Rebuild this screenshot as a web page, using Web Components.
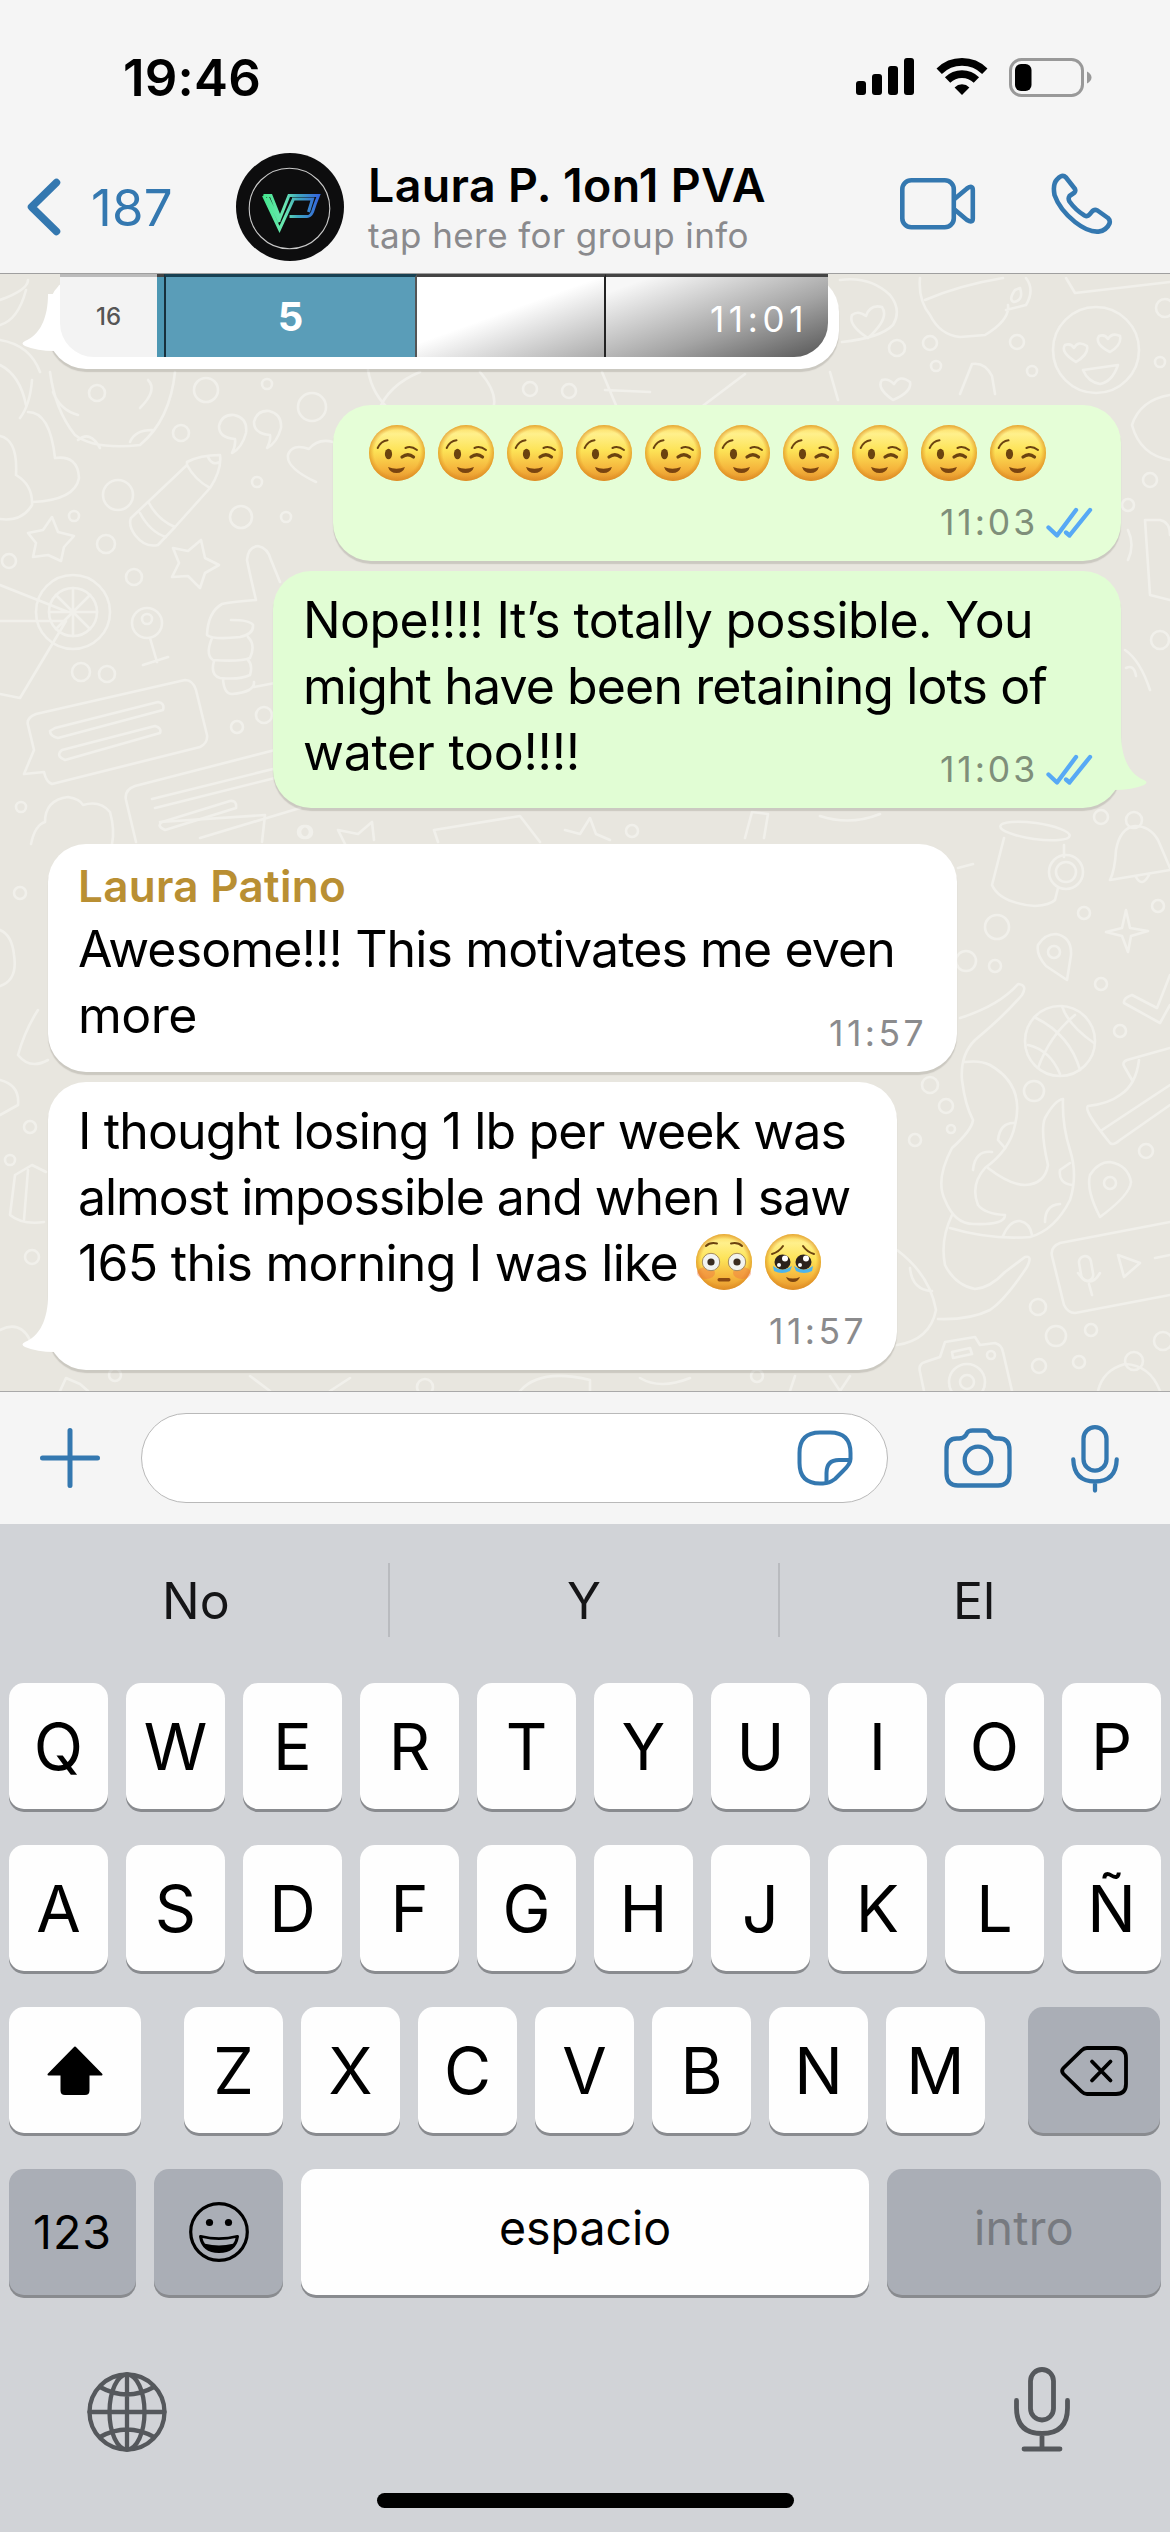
<!DOCTYPE html>
<html lang="es">
<head>
<meta charset="utf-8">
<title>Chat</title>
<style>
html,body{margin:0;padding:0}
body{width:1170px;height:2532px;overflow:hidden;font-family:Inter,"Liberation Sans",sans-serif;color:#000;background:#d1d3d7}
</style>
</head>
<body>
<chat-screen></chat-screen>
<script>
const define=(name,html,init)=>{
  const t=document.createElement('template');t.innerHTML=html;
  customElements.define(name,class extends HTMLElement{
    constructor(){super();this.attachShadow({mode:'open'}).append(t.content.cloneNode(true));}
    connectedCallback(){if(init)init.call(this,this.shadowRoot);}
  });
};

/* ---------- icons ---------- */
const B='fill="none" stroke="#3478b0" stroke-linecap="round" stroke-linejoin="round"';
const G='fill="none" stroke="#55585c" stroke-linecap="round" stroke-linejoin="round"';
const FACE='<defs><linearGradient id="f" x1="0" y1="0" x2="0" y2="1"><stop offset="0" stop-color="#fbd95c"/><stop offset=".16" stop-color="#fff08c"/><stop offset=".45" stop-color="#fde357"/><stop offset=".78" stop-color="#f5b53c"/><stop offset="1" stop-color="#e3922c"/></linearGradient><radialGradient id="e"><stop offset=".82" stop-color="#e08a1e" stop-opacity="0"/><stop offset="1" stop-color="#d98a20" stop-opacity=".65"/></radialGradient></defs><circle cx="28" cy="28" r="28" fill="url(#f)"/><circle cx="28" cy="28" r="28" fill="url(#e)"/>';
const ICONS={
signal:[58,38,'<g fill="#000"><rect x="0" y="23" width="10" height="14" rx="3"/><rect x="16" y="16" width="10" height="21" rx="3"/><rect x="32" y="8" width="10" height="29" rx="3"/><rect x="48" y="0" width="10" height="37" rx="3"/></g>'],
wifi:[52,38,'<g fill="none" stroke="#000" stroke-width="7.6"><path d="M3.2 13.2A32.5 32.5 0 0 1 48.8 13.2"/><path d="M11.6 22A20.5 20.5 0 0 1 40.4 22"/></g><path d="M26 37 18.6 29.4A10.5 10.5 0 0 1 33.4 29.4Z" fill="#000"/>'],
battery:[83,40,'<rect x="1.5" y="1.5" width="72" height="36" rx="11" fill="none" stroke="#999" stroke-width="3"/><rect x="6" y="6" width="16.500" height="27" rx="6" fill="#000"/><path d="M78 13.500Q82.500 16 82.500 19.500T78 25.500Z" fill="#999"/>'],
back:[34,58,`<path ${B} stroke-width="7.500" d="M29.500 4.500 4.500 29 29.500 53.500"/>`],
video:[76,52,`<g ${B} stroke-width="4.600"><rect x="2.300" y="2.300" width="51.500" height="47" rx="9"/><path d="M54.500 21 67 10.500Q72.800 6.500 72.800 12V40.500Q72.800 45.500 67 42L54.500 31.500"/></g>`],
phone:[62,62,`<path ${B} stroke-width="4.600" d="M9.500 3.500Q12.500 2 15 4.500L24 16Q24.800 18 23.500 19.500L18.500 23Q16.800 25.500 18.500 28.500Q24.500 37 33.500 42.500Q36.500 44 38.500 41.500L41.500 38Q43.500 36 46.500 37.500L57 45Q59.500 47.500 58.500 50.500Q55.500 57.500 47.500 58.600Q37.500 59.500 24 49Q8.500 36.500 3.500 22Q1.500 11 6 6.500Q8 4.300 9.500 3.500Z"/>`],
avatar:[108,108,'<defs><linearGradient id="g" x1="0" x2="1"><stop offset="0" stop-color="#45e58d"/><stop offset=".38" stop-color="#6be8b2"/><stop offset=".62" stop-color="#3fa8bd"/><stop offset="1" stop-color="#3466dd"/></linearGradient></defs><circle cx="54" cy="54" r="54" fill="#0d0d0e"/><circle cx="53.500" cy="55.500" r="40.300" fill="none" stroke="#c9c9c9" stroke-width="1.100"/><path d="M27.500 42.500H35L44 65 53 42.500H82.500Q79 51 76.500 59Q74.500 63.500 71 63.500H53.500M56 46H76.500L72.500 59M27.500 42.500 43.500 76.500 57.500 46M31.500 44 43.500 69" fill="none" stroke="url(#g)" stroke-width="3"/>'],
ticks:[48,32,'<g fill="none" stroke="#57a9f5" stroke-width="4.300" stroke-linecap="round" stroke-linejoin="round"><path d="M2.500 20.500 11 28.500 30 3"/><path d="M20 25.500 23.500 28.500 44 3"/></g>'],
plus:[60,60,`<path ${B} stroke-width="5" d="M30 2.500V57.500M2.500 30H57.500"/>`],
sticker:[56,56,`<g ${B} stroke-width="4"><path d="M26 53.500H23Q2.500 53.500 2.500 33V23Q2.500 2.500 23 2.500H33Q53.500 2.500 53.500 23V29Q53.500 34 46 41L38 49Q32 53.500 26 53.500Z"/><path d="M29.500 52.500V43Q29.500 30 42 30H52.500"/></g>`],
camera:[68,60,`<g ${B} stroke-width="4.300"><path d="M13 10.500H15Q19.500 10.500 22 7L23 5Q24.500 2.500 28.500 2.500H39.500Q43.500 2.500 45 5L46 7Q48.500 10.500 53 10.500H55Q65.500 10.500 65.500 22V45Q65.500 57.500 54 57.500H14Q2.500 57.500 2.500 45V22Q2.500 10.500 13 10.500Z"/><circle cx="34" cy="32" r="13.300"/></g>`],
mic:[48,68,`<g ${B} stroke-width="4.300"><rect x="12.500" y="2.200" width="23" height="43.500" rx="11.500"/><path d="M2.300 34.500Q3 56.500 24 56.500T45.700 34.500M24 57V65.500"/></g>`],
shift:[58,50,'<path d="M29 1.500 55.500 28.500H42.500V44.500Q42.500 48 39 48H19Q15.500 48 15.500 44.500V28.500H2.500Z" fill="#000" stroke="#000" stroke-width="2" stroke-linejoin="round"/>'],
del:[68,50,'<g fill="none" stroke="#000" stroke-width="3.800" stroke-linecap="round" stroke-linejoin="round"><path d="M27 2H56Q66 2 66 12V38Q66 48 56 48H27Q24 48 21.500 45.500L3.500 28Q.800 25 3.500 22L21.500 4.500Q24 2 27 2Z"/><path d="M32 15.500 50.500 34.500M50.500 15.500 32 34.500"/></g>'],
smile:[60,60,'<circle cx="30" cy="30" r="28.300" fill="none" stroke="#000" stroke-width="3.200"/><circle cx="20.500" cy="20.500" r="3.600"/><circle cx="39.500" cy="20.500" r="3.600"/><path d="M11.500 34.500Q30 39 48.500 34.500Q46 49.500 30 49.500T11.500 34.500Z" fill="#000" stroke="#000" stroke-width="3" stroke-linejoin="round"/><path d="M13.500 36Q30 40 46.500 36Q46 39.500 44 41.800Q30 45 16 41.800Q14 39 13.500 36Z" fill="#aaaeb6"/>'],
globe:[80,80,`<g ${G} stroke-width="4.300"><circle cx="40" cy="40" r="37.500"/><ellipse cx="40" cy="40" rx="17.500" ry="37.500"/><path d="M40 2.500V77.500M2.500 40H77.500M13 15Q40 30 67 15M13 65Q40 50 67 65"/></g>`],
dictate:[56,85,`<g ${G} stroke-width="4.800"><rect x="16.500" y="2.500" width="23" height="50.500" rx="11.500"/><path d="M2.500 33.500V41Q2.500 66.500 28 66.500T53.500 41V33.500M28 67V81M10 82H46"/></g>`],
wink:[56,56,FACE+'<g fill="none" stroke="#6b4310" stroke-linecap="round"><path stroke-width="2" d="M8.700 23Q12 16 18.500 15.300M36.500 23Q42 20.500 48 25"/><path stroke-width="3.200" d="M33 32Q39 27.500 44.500 32"/></g><ellipse cx="19.500" cy="29" rx="3.600" ry="5.200" fill="#6b4310"/><path d="M19 42Q27.500 45.500 36 42Q34 48 27.500 48T19 42Z" fill="#7a4410"/>'],
flushed:[56,56,FACE+'<ellipse cx="10" cy="39" rx="9" ry="6" fill="#ee7440" opacity=".45"/><ellipse cx="46" cy="39" rx="9" ry="6" fill="#ee7440" opacity=".45"/><g fill="none" stroke="#6b4310" stroke-width="2" stroke-linecap="round"><path d="M10 12Q14 8 21 9.500M35 9.500Q42 8 46 12"/></g><g fill="#f2f3f0" stroke="#a48b5c" stroke-width="1"><circle cx="15" cy="28" r="8.700"/><circle cx="41" cy="28" r="8.700"/></g><circle cx="15" cy="28" r="3.600" fill="#3a2c20"/><circle cx="41" cy="28" r="3.600" fill="#3a2c20"/><rect x="21.500" y="44" width="13" height="3.500" rx="1.700" fill="#8b4a12"/>'],
tears:[56,56,FACE+'<g fill="none" stroke="#6b4310" stroke-width="2" stroke-linecap="round"><path d="M7 20Q14 18 18 12M38 12Q42 18 49 20"/></g><path d="M8 32Q17 39 27 32L25 37Q17 41 9 37ZM29 32Q39 39 48 32L47 37Q39 41 31 37Z" fill="#4db5ed"/><ellipse cx="17.500" cy="28" rx="8" ry="7.500" fill="#2c221c"/><ellipse cx="38.500" cy="28" rx="8" ry="7.500" fill="#2c221c"/><g fill="#fff"><circle cx="20" cy="24.500" r="3"/><circle cx="41" cy="24.500" r="3"/><circle cx="14" cy="31" r="2"/><circle cx="35" cy="31" r="2"/></g><path d="M21 43Q28 46 35 43Q33 48 28 48T21 43Z" fill="#7a4410"/>']
};
customElements.define('ui-icon',class extends HTMLElement{
  connectedCallback(){
    const [w,h,body]=ICONS[this.getAttribute('name')];
    const r=this.shadowRoot||this.attachShadow({mode:'open'});
    r.innerHTML=`<style>:host{display:block;flex:none;width:${w}px;height:${h}px}svg{display:block}</style><svg width="${w}" height="${h}" viewBox="0 0 ${w} ${h}">${body}</svg>`;
  }
});

/* A single line of text whose tracking is adjusted to a given width. */
define('fit-line','<style>:host{display:block;width:max-content;white-space:nowrap}span{display:inline-block;letter-spacing:0}</style><span><slot></slot></span>',function(r){
  const w=+this.getAttribute('w');if(!w)return;
  const s=r.querySelector('span'),n=this.textContent.trim().length;
  const d=(w-s.getBoundingClientRect().width)/n;
  s.style.letterSpacing=d+'px';
});

define('status-bar',`<style>
:host{display:flex;height:120px;align-items:flex-start;font-weight:600;font-size:51px}
fit-line{margin:47px 0 0 123px;line-height:62px}
.r{display:flex;margin:58px 78px 0 auto;gap:21.500px}
</style><fit-line w="138">19:46</fit-line><div class="r"><ui-icon name="signal"></ui-icon><ui-icon name="wifi"></ui-icon><ui-icon name="battery"></ui-icon></div>`);

define('chat-header',`<style>
:host{display:flex;border-bottom:1.500px solid #9f9f9f;box-sizing:border-box;height:154px}
.n{color:#3478b0;font-size:51px;line-height:62px;margin:57px 0 0 30px;width:82px}
.t{margin:35px 0 0 22px;width:530px}
.t1{font-weight:600;font-size:46.500px;line-height:60px;margin-left:2px}
.t2{color:#8a8a8d;font-size:35px;line-height:44px;margin-left:2px;margin-top:-2px}
.b{margin:58px 0 0 27px}.a{margin:33px 0 0 63px}.v{margin:58px 0 0 4px}.p{margin:53px 0 0 75px}
</style><ui-icon class="b" name="back"></ui-icon><fit-line class="n" w="82">187</fit-line><ui-icon class="a" name="avatar"></ui-icon>
<div class="t"><fit-line class="t1" w="398">Laura P. 1on1 PVA</fit-line><fit-line class="t2" w="381">tap here for group info</fit-line></div>
<ui-icon class="v" name="video"></ui-icon><ui-icon class="p" name="phone"></ui-icon>`);

define('wall-paper',`<style>:host{position:absolute;inset:0;z-index:0}svg{display:block}</style>
<svg width="1170" height="1117" viewBox="0 274 1170 1117"><rect y="274" width="1170" height="1117" fill="#e8e6df"/>
<g id="d" fill="none" stroke="#f1f0eb" stroke-width="2.600" stroke-linecap="round" stroke-linejoin="round">
<path d="M50 372Q55 410 75 435Q95 450 140 445Q170 420 175 372M53 392Q60 410 78 415M78 440Q90 430 100 448M130 442Q135 430 152 430M148 380Q158 390 140 408"/>
<path d="M20 418Q30 405 32 380M28 412Q50 412 55 458Q78 455 79 478Q75 500 33 502M0 436Q18 440 16 475Q33 485 32 505Q22 522 0 519"/>
<path d="M187 465 131 518Q128 525 135 535Q145 548 158 545L175 527 210 488Q222 470 220 455Q200 455 187 462ZM149 503Q158 520 175 527M140 513Q150 532 166 537M187 465Q195 480 210 488M208 457Q212 466 220 462"/>
<path d="M52 517 58 532 74 536 64 547 61 561 48 555 33 557 36 543 28 533 43 530ZM201 540 205 558 219 565 205 573 200 588 188 576 172 577 179 563 173 548 188 551Z"/>
<path d="M316 482Q286 468 288 455Q292 443 309 449Q318 438 333 442M235 439Q219 438 219 426Q222 414 234 415Q248 418 246 433Q242 448 232 453Q236 445 235 439M270 435Q254 434 254 422Q257 410 269 411Q282 414 281 428Q277 443 267 448Q271 440 270 435"/>
<path d="M0 585 68 612M0 621H66L20 698 0 694M73 588V636M49 612H97M56 595 90 629M90 595 56 629M150 638 157 662M143 665 168 657"/>
<path d="M256 600Q250 575 247 560Q248 547 258 546Q268 548 271 560L280 582M256 600Q230 602 222 604Q208 612 207 635Q213 640 240 637Q254 634 253 625Q250 620 231 620M212 638Q205 655 213 660Q240 662 250 658Q256 645 248 637M214 661Q210 675 220 678Q240 680 250 675Q253 665 248 660M223 679Q224 694 232 694Q255 692 254 682M254 687 275 683"/>
<path d="M28 725Q26 718 36 714L185 680Q193 680 196 690L207 735Q208 743 200 747L52 784Q46 782 44 772L24 774 34 750ZM55 728 158 702Q165 703 163 710L58 738Q50 736 50 731ZM62 750 155 726Q162 728 160 733L65 760Q57 757 60 752Z"/>
<path d="M136 842 126 800Q124 790 135 786L275 750M152 799 273 769M155 808 275 778M162 822 230 801Q237 800 236 808L165 830Q156 826 162 822M200 838 300 808"/>
<path d="M31 844Q35 825 45 822Q45 800 68 797Q80 799 83 805Q100 800 110 812Q115 830 112 844"/>
<ellipse cx="1035" cy="831" rx="35" ry="8" transform="rotate(8 1035 831)"/><path d="M1004 838 992 885Q1000 903 1035 906Q1050 905 1055 900L1058 888M1064 845V857"/>
<path d="M1110 880Q1115 870 1116 850Q1120 828 1135 826Q1150 826 1158 840L1170 868M1110 880 1170 870M1136 877Q1142 888 1149 875"/>
<path d="M1126 910 1130 928 1148 931 1131 936 1128 952 1122 936 1106 932 1122 928ZM958 868 973 864M1067 980 1046 966Q1036 955 1038 945Q1045 934 1056 934Q1072 937 1071 955Z"/>
<circle cx="1060" cy="1041" r="35"/><path d="M1036 1018Q1070 1035 1080 1070M1028 1045Q1050 1050 1060 1074M1062 1006Q1068 1025 1094 1043M1075 1015Q1050 1035 1038 1068"/>
<path d="M1170 975 1157 1008 1132 995Q1123 998 1124 1003L1160 1023 1170 1005M1170 1048 1127 1060Q1122 1062 1124 1066L1132 1080M1139 1060Q1136 1085 1120 1095Q1108 1104 1088 1106Q1083 1110 1110 1143Q1113 1146 1120 1140L1170 1105M1102 1130 1170 1085"/>
<path d="M1100 1217Q1086 1190 1090 1175Q1098 1162 1110 1162Q1128 1165 1131 1182Q1130 1195 1100 1217Z"/>
<path d="M960 1018Q1000 1005 1018 984Q1028 985 1022 995Q1005 1015 975 1040Q960 1055 962 1080Q965 1105 973 1120Q972 1130 952 1148Q935 1180 945 1200Q955 1225 975 1224Q1005 1225 1005 1215Q985 1214 978 1205Q970 1185 985 1168Q1010 1150 1015 1125Q1025 1085 990 1065Q980 1060 965 1062"/>
<path d="M988 1168Q1010 1185 1025 1185Q1045 1184 1048 1165Q1040 1130 1045 1118Q1055 1100 1063 1099Q1062 1125 1070 1150Q1078 1175 1070 1200Q1055 1230 1030 1237Q990 1240 950 1228M952 1215Q940 1240 945 1265Q955 1285 975 1289Q990 1288 1005 1272L1025 1257Q1033 1255 1027 1267Q1005 1300 990 1310Q970 1320 938 1319M1003 1236Q1010 1220 1020 1221Q1030 1223 1032 1235M1045 1222Q1045 1205 1060 1204M1072 1185Q1058 1183 1060 1170L1070 1163M1015 1123Q1000 1122 998 1140L1005 1148M992 1152Q975 1150 973 1170"/>
<path d="M897 1250Q930 1275 936 1310Q930 1340 897 1345M910 1268Q912 1290 932 1291M1170 1222 1060 1243Q1050 1247 1052 1256L1064 1305Q1068 1313 1075 1313L1170 1295M1118 1255 1140 1263 1124 1277ZM1155 1258 1170 1255M1078 1273Q1090 1290 1100 1273M1089 1284 1092 1295"/><rect x="1080" y="1256" width="12" height="25" rx="6" transform="rotate(-10 1086 1268)"/>
<path d="M924 1391 920 1372Q918 1364 925 1362L940 1357 945 1342 975 1337 980 1345 995 1343Q1002 1345 1003 1352L1012 1391M952 1352 970 1348 972 1354 953 1358Z"/><circle cx="967" cy="1382" r="18"/><circle cx="967" cy="1382" r="7"/>
<path d="M1098 1391Q1103 1370 1125 1364Q1150 1365 1160 1391"/>
<path d="M920 278Q918 300 930 315Q940 335 960 337L985 335Q1010 320 1008 305M925 300Q960 285 1003 278M1026 278Q1035 290 1026 305L1006 310M1015 290Q1008 300 1014 302Q1024 300 1020 288ZM840 280Q870 276 890 295Q902 310 893 325Q880 338 842 342M868 338Q848 325 852 315Q858 310 866 316Q870 304 882 307Q890 318 868 338Z"/>
<circle cx="1096" cy="350" r="43"/><path d="M1076 362Q1060 352 1065 345Q1071 343 1074 348Q1078 340 1087 346Q1089 354 1076 362ZM1110 352Q1094 344 1099 336Q1105 334 1108 339Q1112 332 1120 336Q1122 345 1110 352ZM1083 370 1118 365Q1112 382 1100 384Q1088 382 1083 370ZM1066 278 1075 293 1170 282M960 394 972 364Q985 362 992 376L995 394"/>
<path d="M0 300Q28 290 28 280M0 325Q18 320 26 290M0 340Q30 345 40 372M0 365Q20 375 26 405M368 370Q372 395 392 412M378 412Q388 385 420 372M480 372Q500 395 492 412M602 372 618 410M605 390 650 392M700 408 745 374M830 372 838 400M893 400Q876 388 882 380Q888 378 894 384Q900 374 910 382Q912 392 893 400Z"/>
<path d="M1170 395Q1140 400 1132 425Q1140 455 1170 460M1145 520H1160Q1170 522 1170 535M1145 520 1150 595 1170 600M1128 560Q1135 545 1128 530M1125 650Q1140 660 1150 690M1126 668Q1134 664 1136 676 1150 700L1170 730M1140 700 1128 716M1140 706 1150 740M1170 770Q1150 765 1150 800"/>
<path d="M0 930Q12 935 14 955Q18 980 0 986M38 1010Q25 1030 18 1055Q30 1070 48 1060M0 1080Q20 1085 18 1105L0 1115M15 1175 32 1165 46 1172M15 1175 10 1215Q22 1225 44 1222M28 1170 24 1220M0 1330Q20 1320 30 1340M60 1391 66 1378 80 1384 88 1391M250 1376 270 1391M330 1391 350 1378M520 1391Q540 1368 590 1380V1391M640 1378Q660 1390 690 1378M790 1391 795 1376M830 1376 840 1391 850 1376M160 822 265 815 262 842M345 844 338 830 358 834 372 822 374 840M438 842 434 830 520 816 540 842M565 830 580 834 590 818 596 834 610 840M745 838 752 812 768 814 764 838M820 816Q850 826 880 814"/>
</g></svg>`,function(r){
  const g=r.getElementById('d'),c='97 393 8,206 390 12,312 407 14,181 433 8,118 495 15,257 482 5,241 517 11,286 517 5,74 516 5,106 544 9,9 561 7,134 577 8,73 612 37,73 612 24,147 623 15,147 619 5,81 672 9,107 674 8,237 727 6,264 715 8,21 807 5,304 832 6,1066 872 10,1066 872 17,1134 820 8,1101 817 7,1158 906 6,1084 913 6,997 927 12,966 961 10,995 966 6,1101 984 6,1120 1031 6,1034 1091 10,946 1106 7,951 1129 4,1146 1151 7,1038 1307 8,1056 1336 10,1091 1330 6,1039 1366 7,1079 1362 6,1163 1341 9,991 1355 4,1054 952 6,1110 1183 6,897 348 8,930 343 7,1017 342 7,936 366 5,1032 371 5,1165 308 9,1160 362 5,267 384 5,530 389 7,569 391 7,1150 480 7,1128 505 6,1160 640 9,20 893 6,30 1127 6,32 1257 7,115 1375 6,425 1387 8,757 1376 6,632 831 6,306 832 6,10 1160 5,930 1085 8,915 1140 6,1134 1361 9';
  for(const k of c.split(',')){const [x,y,q]=k.split(' ');const e=document.createElementNS('http://www.w3.org/2000/svg','circle');e.setAttribute('cx',x);e.setAttribute('cy',y);e.setAttribute('r',q);g.append(e);}
});

define('chat-bubble',`<style>
:host{display:flex;flex-direction:column;position:relative;box-sizing:border-box;border-radius:38px;background:var(--bg,#fff);font-size:50px;line-height:66px;box-shadow:0 3px 1px rgba(90,85,75,.2);width:var(--w);height:var(--h);margin-top:var(--mt,0);margin-left:var(--ml,48px);padding:var(--pt,16px) 0 0 30px}
:host([mine]){--bg:#e1fdd4}
.tail{position:absolute;bottom:11px;width:38px;height:64px;display:none}
:host([tail=left]) .tail{display:block;left:-28px}
:host([tail=right]) .tail{display:block;right:-28px;transform:scaleX(-1)}
.f{display:flex;align-self:flex-end;gap:8px;margin:var(--fm,-35px) var(--fr,27px) 0 0;color:var(--fc,#8b8b8d);font-size:35.500px;line-height:40px}
:host([plain]) .f{display:none}
::slotted(ui-icon){margin-top:4px}
</style>
<svg class="tail" viewBox="0 0 38 64"><path d="M28 0C28 24 20 41 5 47Q0 49.500 5 52Q18 57.500 38 57V0Z" fill="var(--bg,#fff)"/></svg>
<slot></slot><div class="f"><slot name="time"></slot></div>`);

define('photo-strip',`<style>
:host{display:flex;width:768px;height:83px;border-radius:0 0 34px 34px;overflow:hidden;background:#fff;line-height:1}
.c{display:flex;justify-content:center;box-sizing:border-box;border-top:3px solid #444;align-items:flex-start}
.n{width:97px;background:#f3f3f3;border-top-color:#bbb;font-size:24px;font-weight:500;color:#555;padding-top:28px}
.s{width:7px;background:#4d97b3}
.b{width:253px;background:#5a9db8;border-left:2px solid #17303c;border-top-color:#174052;border-right:2px solid #555;color:#fff;font-size:40px;font-weight:700;padding-top:20px}
.w{width:189px;background:linear-gradient(160deg,#fff 45%,#aaa);border-right:2px solid #222}
.g{flex:1;background:linear-gradient(160deg,#f7f7f7 10%,#a5a5a5 60%,#555);color:#fff;font-size:35px;justify-content:flex-end;padding:25px 20px 0 0}
</style><div class="c n"><fit-line>16</fit-line></div><div class="c s"></div><div class="c b">5</div><div class="c w"></div><div class="c g"><fit-line w="98">11:01</fit-line></div>`);

define('chat-thread',`<style>
:host{display:block;position:relative;height:1117px;overflow:hidden}
.l{position:relative;z-index:1;display:flex;flex-direction:column;align-items:flex-start}
.e{display:flex;gap:13px;padding-left:6px;height:56px}
.name{color:#b98f33;font-weight:600;font-size:44px;line-height:52px;margin:0 0 4px 0}
.x{display:flex;align-items:center}.x ui-icon{margin:-2px 0 0 18px}.x ui-icon+ui-icon{margin-left:13px}
</style><wall-paper></wall-paper><div class="l">
<chat-bubble tail="left" plain style="--w:791px;--h:95px;--pt:0"><photo-strip style="margin-left:-18px"></photo-strip></chat-bubble>
<chat-bubble mine style="--bg:#e5fed7;--w:788px;--h:156px;--ml:333px;--mt:36px;--pt:20px;--fm:22px;--fc:#7f8f7a"><div class="e" id="winks"></div><fit-line slot="time" w="98">11:03</fit-line><ui-icon slot="time" name="ticks"></ui-icon></chat-bubble>
<chat-bubble mine tail="right" style="--w:848px;--h:237px;--ml:273px;--mt:10px;--fc:#7f8f7a"><fit-line w="730">Nope!!!! It’s totally possible. You</fit-line><fit-line w="744">might have been retaining lots of</fit-line><fit-line w="277">water too!!!!</fit-line><fit-line slot="time" w="98">11:03</fit-line><ui-icon slot="time" name="ticks"></ui-icon></chat-bubble>
<chat-bubble style="--w:909px;--h:228px;--mt:36px;--fm:-34px;--fr:30px"><fit-line class="name" w="268">Laura Patino</fit-line><fit-line w="817">Awesome!!! This motivates me even</fit-line><fit-line w="119">more</fit-line><fit-line slot="time" w="98">11:57</fit-line></chat-bubble>
<chat-bubble tail="left" style="--w:849px;--h:288px;--mt:10px;--fm:16px;--fr:30px"><fit-line w="768">I thought losing 1 lb per week was</fit-line><fit-line w="772">almost impossible and when I saw</fit-line><div class="x"><fit-line w="600">165 this morning I was like</fit-line><ui-icon name="flushed"></ui-icon><ui-icon name="tears"></ui-icon></div><fit-line slot="time" w="98">11:57</fit-line></chat-bubble>
</div>`,function(r){
  for(let i=0;i<10;i++){const e=document.createElement('ui-icon');e.setAttribute('name','wink');r.getElementById('winks').append(e);}
});

define('composer-bar',`<style>
:host{display:flex;align-items:center;height:133px;box-sizing:border-box;background:#f5f5f5;border-top:1.500px solid #a9a9a9;padding-left:40px}
.i{display:flex;align-items:center;justify-content:flex-end;box-sizing:border-box;width:747px;height:90px;margin-left:41px;border:1.500px solid #b9b9b9;border-radius:45px;background:#fff;padding-right:34px}
.c{margin-left:56px}.m{margin:2px 0 0 59px}
</style><ui-icon name="plus"></ui-icon><div class="i"><ui-icon name="sticker"></ui-icon></div><ui-icon class="c" name="camera"></ui-icon><ui-icon class="m" name="mic"></ui-icon>`);

define('key-cap',`<style>
:host{display:flex;flex:none;align-items:center;justify-content:center;box-sizing:border-box;width:var(--w,99px);height:126px;border-radius:15px;background:#fefefe;box-shadow:0 3px 0 #898b8f;font-size:64.500px;line-height:126px;padding-top:2px}
:host([dark]){background:#aaaeb6}
:host([word]){font-size:46.500px;padding-top:0}
</style><slot></slot>`);

define('key-board',`<style>
:host{display:block;height:1008px;background:#d1d3d7}
.s{display:flex;height:159px;align-items:flex-start;padding-top:39px;box-sizing:border-box;font-size:50px;line-height:76px;color:#151517}
.s div{box-sizing:border-box;width:390px;height:74px;display:flex;justify-content:center;border-left:2.500px solid #b9bbbf}.s div:first-child{border:0;width:388px;padding-left:4px}
.r{display:flex;gap:18px;padding-left:9px;height:162px}
.z{margin-left:25px}
.f{display:flex;justify-content:space-between;align-items:flex-start;padding:36px 100px 0 87px}
.h{width:417px;height:15px;border-radius:8px;background:#000;margin:41px auto 0}
</style><div class="s"><div><fit-line w="68">No</fit-line></div><div>Y</div><div>El</div></div>
<div class="r" id="a"></div><div class="r" id="b"></div>
<div class="r" id="c"><key-cap style="--w:132px"><ui-icon name="shift"></ui-icon></key-cap></div>
<div class="r"><key-cap dark word style="--w:127px"><fit-line w="79">123</fit-line></key-cap><key-cap dark style="--w:129px"><ui-icon name="smile" style="margin-top:-2px"></ui-icon></key-cap><key-cap word style="--w:568px"><fit-line w="172" style="margin-top:-8px">espacio</fit-line></key-cap><key-cap dark word style="--w:274px;color:#777a80"><fit-line w="100" style="margin-top:-8px">intro</fit-line></key-cap></div>
<div class="f"><ui-icon name="globe" style="margin-top:5px"></ui-icon><ui-icon name="dictate"></ui-icon></div><div class="h"></div>`,function(r){
  const add=(id,s)=>{for(const ch of s){const k=document.createElement('key-cap');k.textContent=ch;r.getElementById(id).append(k);}};
  add('a','QWERTYUIOP');add('b','ASDFGHJKLÑ');add('c','ZXCVBNM');
  const row=r.getElementById('c');row.children[1].style.marginLeft='25px';
  row.insertAdjacentHTML('beforeend','<key-cap dark class="z" style="--w:132px"><ui-icon name="del"></ui-icon></key-cap>');
});

define('chat-screen',`<style>:host{display:flex;flex-direction:column;width:1170px;height:2532px;background:#f5f5f5}</style>
<status-bar></status-bar><chat-header></chat-header><chat-thread></chat-thread><composer-bar></composer-bar><key-board></key-board>`);
</script>
</body>
</html>
